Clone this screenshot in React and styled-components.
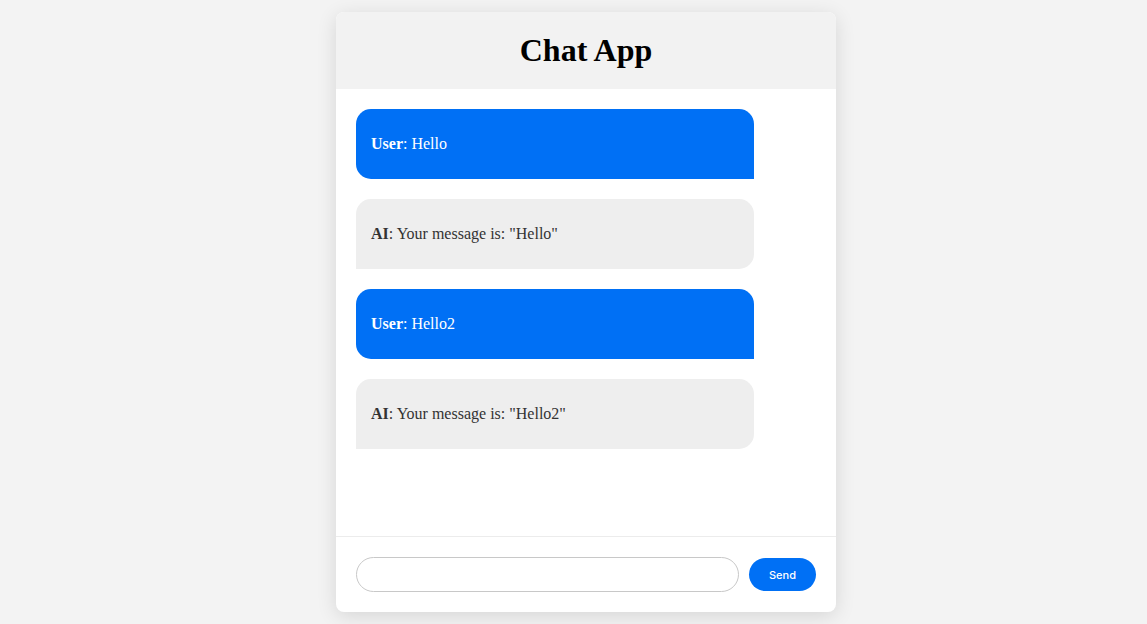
import React, { useState } from 'react';
import styled, { createGlobalStyle } from 'styled-components';

const GlobalStyle = createGlobalStyle`
  html, body {
    margin: 0;
    padding: 0;
  }
  body {
    background-color: #f3f3f3;
    font-family: "Liberation Serif", "Times New Roman", serif;
  }
`;

const SPage = styled.div`
  height: 100vh;
  box-sizing: border-box;
  padding-left: 25px;
  display: flex;
  justify-content: center;
  align-items: center;
`;

const SCard = styled.div`
  width: 500px;
  height: 600px;
  display: flex;
  flex-direction: column;
  background-color: #fff;
  border-radius: 8px;
  overflow: hidden;
  box-shadow: 0 4px 20px rgba(0, 0, 0, 0.12);
`;

const SHeader = styled.div`
  height: 77px;
  display: flex;
  justify-content: center;
  align-items: center;
  background-color: #f2f2f2;
`;

const STitle = styled.h1`
  margin: 0;
  font-size: 32px;
  font-weight: bold;
  color: #000;
`;

const SMessages = styled.div`
  flex: 1;
  display: flex;
  flex-direction: column;
  gap: 20px;
  padding: 20px;
  overflow-y: auto;
`;

const SBubble = styled.div`
  width: 398px;
  box-sizing: border-box;
  padding: 10px 15px;
  font-size: 16px;
  background-color: ${props => (props.isUser ? '#0070f5' : '#eeeeee')};
  color: ${props => (props.isUser ? '#fff' : '#333')};
  border-radius: ${props => (props.isUser ? '15px 15px 0 15px' : '15px 15px 15px 0')};
`;

const SText = styled.p`
  margin: 16px 0;
  line-height: 18px;
`;

const SFooter = styled.div`
  display: flex;
  align-items: center;
  gap: 10px;
  padding: 20px;
  border-top: 1px solid #ececec;
`;

const SInput = styled.input`
  flex: 1;
  height: 35px;
  box-sizing: border-box;
  border: 1px solid #c8c8c8;
  border-radius: 18px;
  padding: 0 15px;
  outline: none;
`;

const SButton = styled.button`
  width: 67px;
  height: 33px;
  border: none;
  border-radius: 17px;
  background-color: #0070f5;
  color: #fff;
  font-family: Inter, "Noto Sans", sans-serif;
  font-size: 11px;
  font-weight: 500;
  cursor: pointer;
`;

const initialMessages = [
  { sender: 'User', text: 'Hello' },
  { sender: 'AI', text: 'Your message is: "Hello"' },
  { sender: 'User', text: 'Hello2' },
  { sender: 'AI', text: 'Your message is: "Hello2"' },
];

function App() {
  const [messages, setMessages] = useState(initialMessages);
  const [value, setValue] = useState('');

  const handleSend = () => {
    if (!value.trim()) return;
    setMessages([
      ...messages,
      { sender: 'User', text: value },
      { sender: 'AI', text: `Your message is: "${value}"` },
    ]);
    setValue('');
  };

  return (
    <>
      <GlobalStyle />
      <SPage>
        <SCard>
          <SHeader>
            <STitle>Chat App</STitle>
          </SHeader>
          <SMessages>
            {messages.map((m, i) => (
              <SBubble key={i} isUser={m.sender === 'User'}>
                <SText>
                  <strong>{m.sender}</strong>: {m.text}
                </SText>
              </SBubble>
            ))}
          </SMessages>
          <SFooter>
            <SInput value={value} onChange={e => setValue(e.target.value)} />
            <SButton onClick={handleSend}>Send</SButton>
          </SFooter>
        </SCard>
      </SPage>
    </>
  );
}

export default App;
